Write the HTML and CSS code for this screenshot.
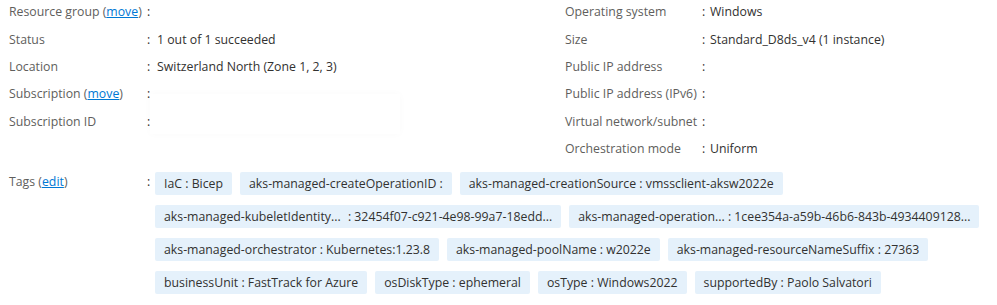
FILE: index.html
```html
<!DOCTYPE html>
<html lang="en">
<head>
    <meta charset="UTF-8">
    <title>Virtual machine scale set - Essentials</title>
    <link rel="stylesheet" href="styles.css">
</head>
<body>
<div class="essentials">
    <div class="col col-left">
        <div class="row">
            <div class="label">Resource group (<a href="#">move</a>)</div>
            <div class="sep">:</div>
            <div class="value"></div>
        </div>
        <div class="row">
            <div class="label">Status</div>
            <div class="sep">:</div>
            <div class="value">1 out of 1 succeeded</div>
        </div>
        <div class="row">
            <div class="label">Location</div>
            <div class="sep">:</div>
            <div class="value">Switzerland North (Zone 1, 2, 3)</div>
        </div>
        <div class="row">
            <div class="label">Subscription (<a href="#">move</a>)</div>
            <div class="sep">:</div>
            <div class="value redacted"><span class="blur-box"></span></div>
        </div>
        <div class="row">
            <div class="label">Subscription ID</div>
            <div class="sep">:</div>
            <div class="value"></div>
        </div>
    </div>
    <div class="col col-right">
        <div class="row">
            <div class="label">Operating system</div>
            <div class="sep">:</div>
            <div class="value">Windows</div>
        </div>
        <div class="row">
            <div class="label">Size</div>
            <div class="sep">:</div>
            <div class="value">Standard_D8ds_v4 (1 instance)</div>
        </div>
        <div class="row">
            <div class="label">Public IP address</div>
            <div class="sep">:</div>
            <div class="value"></div>
        </div>
        <div class="row">
            <div class="label">Public IP address (IPv6)</div>
            <div class="sep">:</div>
            <div class="value"></div>
        </div>
        <div class="row">
            <div class="label">Virtual network/subnet</div>
            <div class="sep">:</div>
            <div class="value"></div>
        </div>
        <div class="row">
            <div class="label">Orchestration mode</div>
            <div class="sep">:</div>
            <div class="value">Uniform</div>
        </div>
    </div>
</div>

<div class="tags-row">
    <div class="label">Tags (<a href="#">edit</a>)</div>
    <div class="sep">:</div>
    <div class="tags">
        <span class="tag">IaC : Bicep</span>
        <span class="tag">aks-managed-createOperationID :</span>
        <span class="tag">aks-managed-creationSource : vmssclient-aksw2022e</span>
        <span class="tag"><span class="tag-key">aks-managed-kubeletIdentity...</span> : 32454f07-c921-4e98-99a7-18edd...</span>
        <span class="tag">aks-managed-operation... : 1cee354a-a59b-46b6-843b-4934409128...</span>
        <span class="tag">aks-managed-orchestrator : Kubernetes:1.23.8</span>
        <span class="tag">aks-managed-poolName : w2022e</span>
        <span class="tag">aks-managed-resourceNameSuffix : 27363</span>
        <span class="tag">businessUnit : FastTrack for Azure</span>
        <span class="tag">osDiskType : ephemeral</span>
        <span class="tag">osType : Windows2022</span>
        <span class="tag">supportedBy : Paolo Salvatori</span>
    </div>
</div>
</body>
</html>
```

FILE: styles.css
```css
:root {
    --label-color: #605e5c;
    --text-color: #323130;
    --link-color: #0078d4;
    --tag-color: #e5f1fb;
}

body {
    font-family: 'Segoe UI', 'Open Sans', sans-serif;
    font-size: 12.3px;
    color: var(--text-color);
    background-color: #fff;
    margin: 0;
    padding: 0 4px 0 9px;
}

a {
    color: var(--link-color);
    text-decoration: underline;
}

.essentials {
    display: grid;
    grid-template-columns: 556px 1fr;
    margin-top: -2px;
}

.row {
    display: grid;
    grid-template-columns: 138px 10px 1fr;
    align-items: center;
    height: 27.4px;
}

.col-right .row {
    grid-template-columns: 137px 8px 1fr;
}

.label {
    color: var(--label-color);
    white-space: nowrap;
}

.redacted {
    position: relative;
    align-self: stretch;
}

.blur-box {
    position: absolute;
    left: -7px;
    top: 14px;
    width: 250px;
    height: 40px;
    background: #fff;
    box-shadow: 0 0 8px rgba(0, 0, 0, 0.025);
}

.tags-row {
    display: grid;
    grid-template-columns: 138px 8px 1fr;
    align-items: start;
    margin-top: 10px;
    line-height: 19px;
}

.tags {
    display: flex;
    flex-wrap: wrap;
    gap: 10px 8px;
}

.tag {
    background-color: var(--tag-color);
    height: 23px;
    line-height: 23px;
    padding: 0 9px;
    border-radius: 2px;
    white-space: nowrap;
}

.tag-key {
    margin-right: 4px;
}
```
